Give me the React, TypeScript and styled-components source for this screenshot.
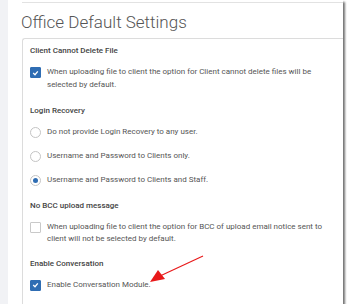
import React from "react";
import styled, { createGlobalStyle } from "styled-components";

const GlobalStyle = createGlobalStyle`
  html, body {
    margin: 0;
    padding: 0;
    background: #ffffff;
  }
  body {
    font-family: Roboto, "Liberation Sans", Arial, sans-serif;
  }
`;

// Screenshot frame with the drop shadow on right/bottom
const Frame = styled.div`
  position: relative;
  width: 343px;
  height: 304px;
  display: flex;
  background: #ffffff;
  overflow: hidden;
  box-shadow: 2px 2px 2px rgba(0, 0, 0, 0.55);
`;

const SideStrip = styled.div`
  width: 8px;
  flex: none;
  background: #f1f2f5;
`;

const Main = styled.div`
  flex: 1;
  display: flex;
  flex-direction: column;
  padding-left: 13px;
`;

const TopRule = styled.div`
  height: 2px;
  border-bottom: 1px solid #e2e2e2;
  margin-left: 1px;
`;

const Title = styled.h1`
  margin: 0;
  padding-top: 7px;
  height: 28px;
  font-size: 17px;
  font-weight: 300;
  color: #555555;
  line-height: 24px;
`;

const Card = styled.div`
  margin-left: 1px;
  border: 1px solid #dcdcdc;
  border-right: none;
  border-bottom: none;
  border-top-left-radius: 3px;
  padding: 6px 0 0 7px;
  flex: 1;
`;

const Heading = styled.div<{ $gap?: number }>`
  font-size: 8px;
  font-weight: 500;
  color: #444444;
  line-height: 12px;
  margin-top: ${(p) => p.$gap ?? 0}px;
  margin-bottom: 9px;
`;

const Option = styled.label<{ $gap?: number }>`
  display: flex;
  align-items: flex-start;
  gap: 6px;
  margin-top: ${(p) => p.$gap ?? 0}px;
  font-size: 8px;
  color: #555555;
  line-height: 12.5px;
`;

const OptionText = styled.span`
  width: 280px;
`;

const Box = styled.span<{ $checked?: boolean }>`
  flex: none;
  width: 11px;
  height: 11px;
  margin-top: 1px;
  box-sizing: border-box;
  border-radius: 1px;
  display: flex;
  align-items: center;
  justify-content: center;
  background: ${(p) => (p.$checked ? "#2f6db3" : "#ffffff")};
  border: 1px solid ${(p) => (p.$checked ? "#2f6db3" : "#c9c9c9")};
`;

const Radio = styled.span<{ $checked?: boolean }>`
  flex: none;
  width: 11px;
  height: 11px;
  margin-top: 1px;
  box-sizing: border-box;
  border-radius: 50%;
  border: 1px solid #c4c4c4;
  display: flex;
  align-items: center;
  justify-content: center;
  &::after {
    content: "";
    width: 5px;
    height: 5px;
    border-radius: 50%;
    background: ${(p) => (p.$checked ? "#2f6db3" : "transparent")};
  }
`;

const Arrow = styled.svg`
  position: absolute;
  left: 140px;
  top: 250px;
`;

const Check = () => (
  <svg width="7" height="6" viewBox="0 0 7 6">
    <path d="M1.2 3 L3 4.7 L5.8 1.3" fill="none" stroke="#fff" strokeWidth="1.3" />
  </svg>
);

const App: React.FC = () => {
  return (
    <>
      <GlobalStyle />
      <Frame>
        <SideStrip />
        <Main>
          <TopRule />
          <Title>Office Default Settings</Title>
          <Card>
            <Heading>Client Cannot Delete File</Heading>
            <Option $gap={5}>
              <Box $checked>
                <Check />
              </Box>
              <OptionText>
                When uploading file to client the option for Client cannot delete files will be
                selected by default.
              </OptionText>
            </Option>

            <Heading $gap={14}>Login Recovery</Heading>
            <Option $gap={8}>
              <Radio />
              <OptionText>Do not provide Login Recovery to any user.</OptionText>
            </Option>
            <Option $gap={11}>
              <Radio />
              <OptionText>Username and Password to Clients only.</OptionText>
            </Option>
            <Option $gap={12}>
              <Radio $checked />
              <OptionText>Username and Password to Clients and Staff.</OptionText>
            </Option>

            <Heading $gap={13}>No BCC upload message</Heading>
            <Option $gap={8}>
              <Box />
              <OptionText>
                When uploading file to client the option for BCC of upload email notice sent to
                client will not be selected by default.
              </OptionText>
            </Option>

            <Heading $gap={12}>Enable Conversation</Heading>
            <Option $gap={9}>
              <Box $checked>
                <Check />
              </Box>
              <OptionText>Enable Conversation Module.</OptionText>
            </Option>
          </Card>
        </Main>
        <Arrow width="70" height="40" viewBox="0 0 70 40">
          <line x1="63" y1="6" x2="20" y2="26" stroke="#e8191a" strokeWidth="1.2" />
          <polygon points="10,32 18,20 25,29" fill="#e8191a" />
        </Arrow>
      </Frame>
    </>
  );
};

export default App;
